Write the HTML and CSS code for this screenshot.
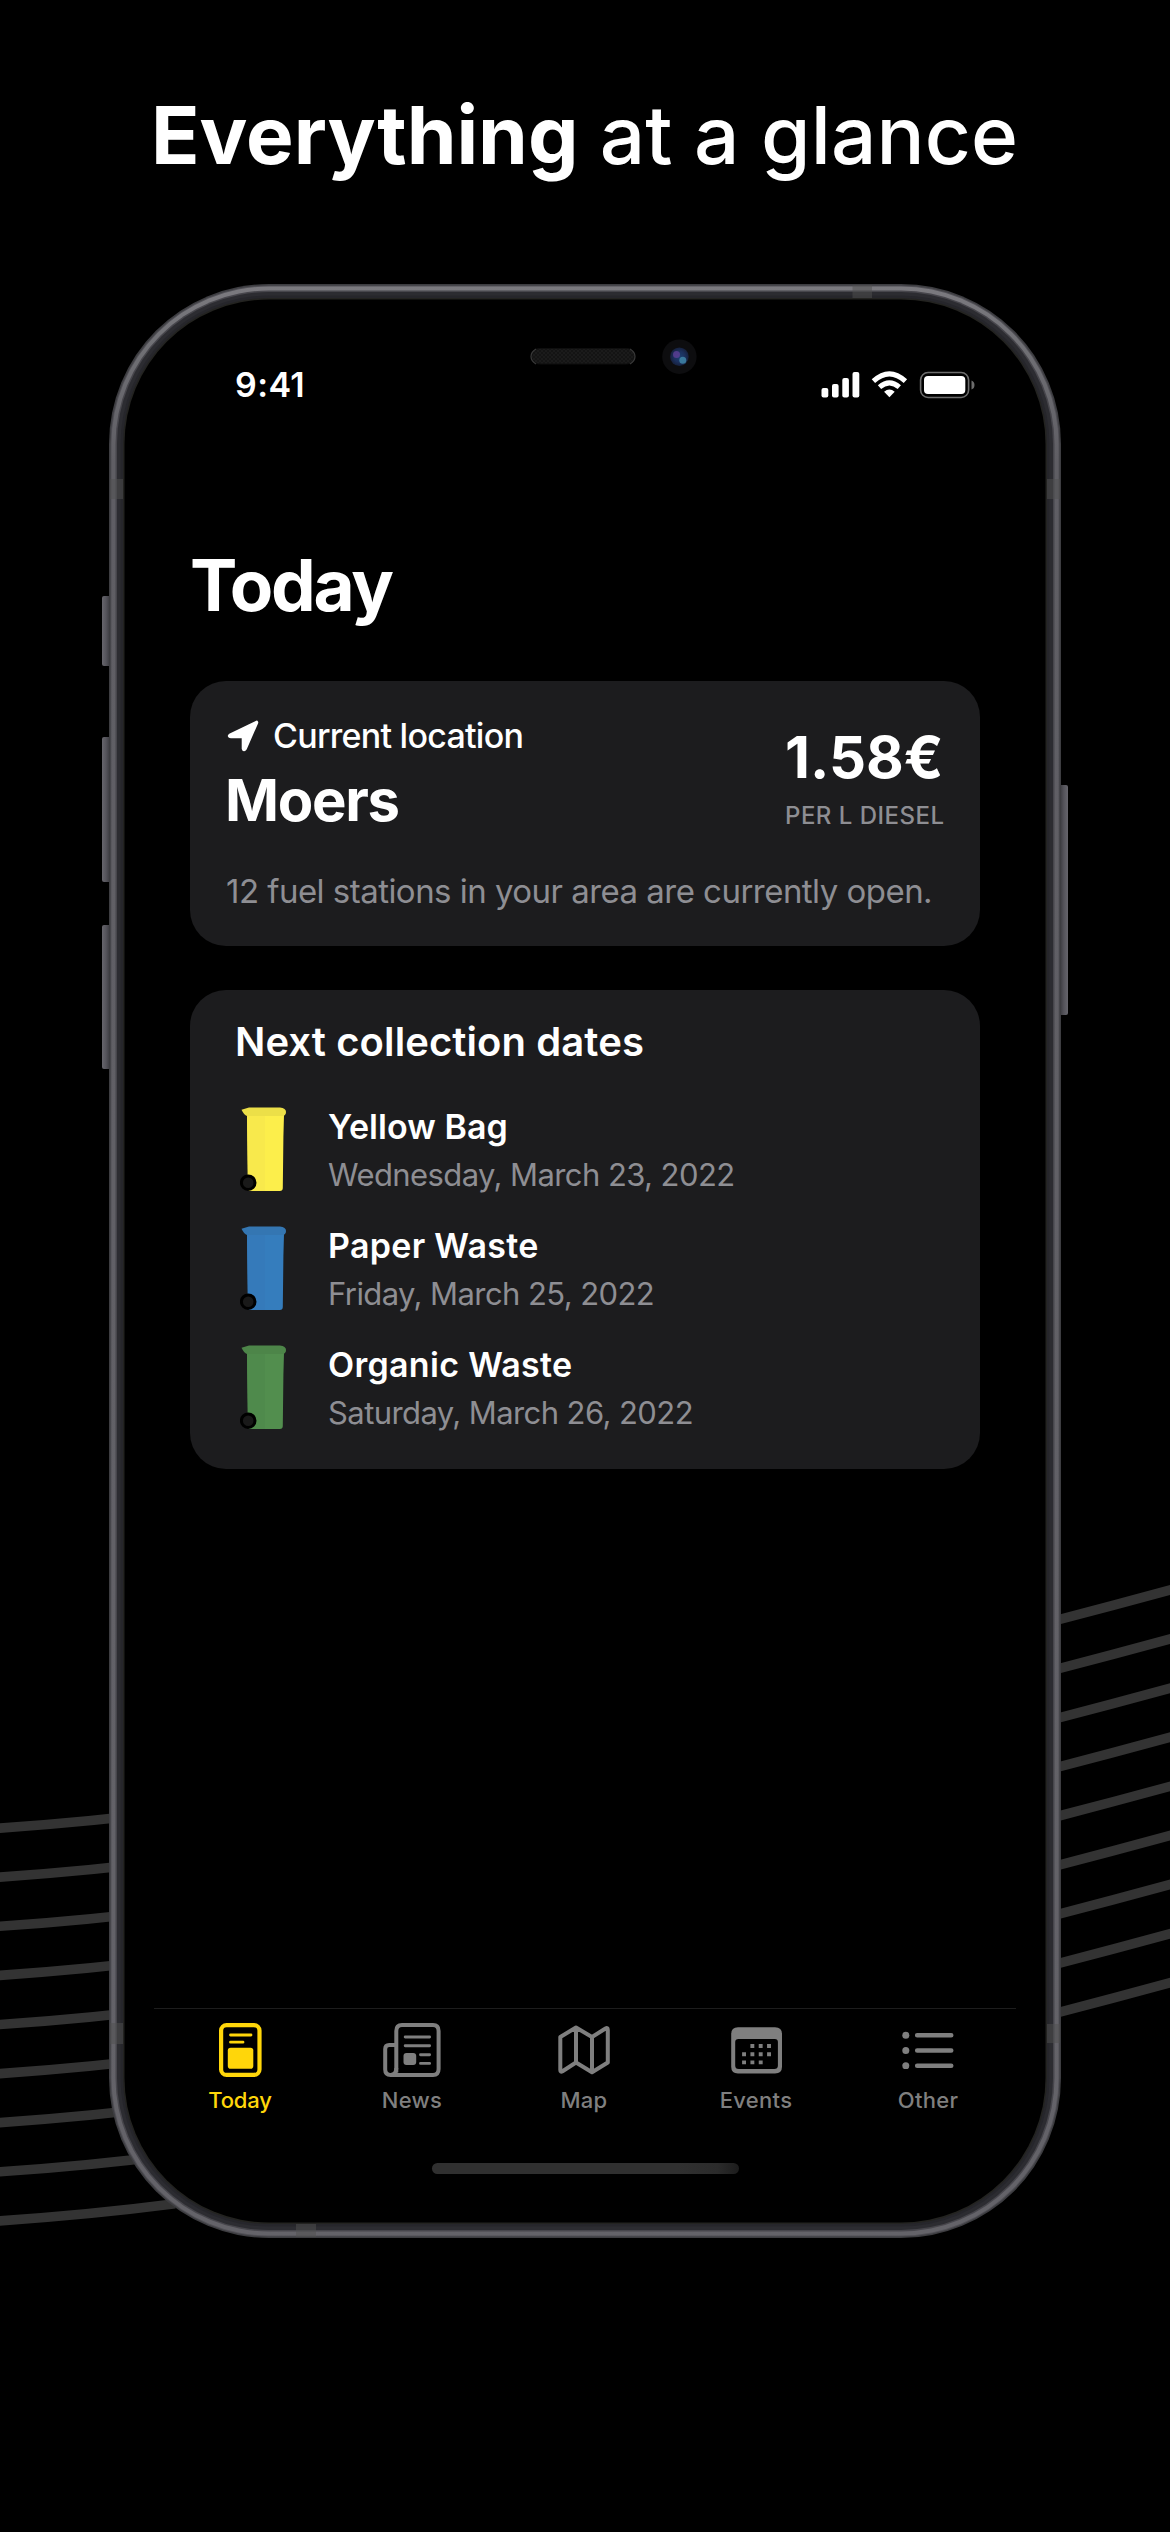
FILE: index.html
```html
<!DOCTYPE html>
<html lang="en">
<head>
<meta charset="utf-8">
<title>Everything at a glance</title>
<link rel="stylesheet" href="styles.css">
</head>
<body>
<svg class="waves" viewBox="0 0 1170 2532" aria-hidden="true">
  <defs>
    <path id="wave-left" d="M-2 1828.2Q90 1822 175 1811"/>
    <path id="wave-right" d="M1055 1620.6Q1115 1605 1175 1588.6"/>
  </defs>
  <g fill="none" stroke="#333" stroke-width="9.6">
    <use href="#wave-left"/><use href="#wave-left" y="49.1"/><use href="#wave-left" y="98.2"/>
    <use href="#wave-left" y="147.3"/><use href="#wave-left" y="196.4"/><use href="#wave-left" y="245.5"/>
    <use href="#wave-left" y="294.6"/><use href="#wave-left" y="343.7"/><use href="#wave-left" y="392.8"/>
    <use href="#wave-right"/><use href="#wave-right" y="49.1"/><use href="#wave-right" y="98.2"/>
    <use href="#wave-right" y="147.3"/><use href="#wave-right" y="196.4"/><use href="#wave-right" y="245.5"/>
    <use href="#wave-right" y="294.6"/><use href="#wave-right" y="343.7"/><use href="#wave-right" y="392.8"/>
  </g>
</svg>

<h1 class="headline"><strong>Everything</strong> <span>at a glance</span></h1>

<main class="phone">
  <svg class="hardware" viewBox="-10 0 972 1954" aria-hidden="true">
    <defs>
      <linearGradient id="rim" x1="0" y1="0" x2="0" y2="1">
        <stop offset="0" stop-color="#7b7a7f"/><stop offset=".03" stop-color="#707075"/>
        <stop offset=".09" stop-color="#5f5e64"/><stop offset="1" stop-color="#646369"/>
      </linearGradient>
      <linearGradient id="button" x1="0" x2="1">
        <stop offset="0" stop-color="#66656c"/><stop offset=".45" stop-color="#55545b"/><stop offset="1" stop-color="#333338"/>
      </linearGradient>
      <linearGradient id="button-right" x1="1" x2="0">
        <stop offset="0" stop-color="#66656c"/><stop offset=".45" stop-color="#55545b"/><stop offset="1" stop-color="#333338"/>
      </linearGradient>
      <pattern id="mesh" width="4" height="4" patternUnits="userSpaceOnUse">
        <rect width="4" height="4" fill="#1b1b1b"/><circle cx="1" cy="1" r=".9" fill="#101010"/><circle cx="3" cy="3" r=".9" fill="#101010"/>
      </pattern>
      <radialGradient id="lens"><stop offset="0" stop-color="#1c3f70"/><stop offset=".6" stop-color="#1b2f5c"/><stop offset="1" stop-color="#16203c"/></radialGradient>
    </defs>
    <g fill="url(#button)">
      <rect x="-7" y="312" width="9" height="70" rx="2"/>
      <rect x="-7" y="453" width="9" height="145" rx="2"/>
      <rect x="-7" y="641" width="9" height="144" rx="2"/>
    </g>
    <rect x="950" y="501" width="9" height="230" rx="2" fill="url(#button-right)"/>
    <rect width="952" height="1954" rx="160" fill="#3d3d41"/>
    <rect x="1.5" y="1.5" width="949" height="1951" rx="158.500" fill="#515056"/>
    <rect x="2.500" y="2.500" width="947" height="1949" rx="157.500" fill="url(#rim)"/>
    <rect x="6.500" y="6.500" width="939" height="1941" rx="153.500" fill="#47464c"/>
    <rect x="8" y="8" width="936" height="1938" rx="152" fill="#2c2c31"/>
    <rect x="11.500" y="11.500" width="929" height="1931" rx="148.500" fill="#26262b"/>
    <rect x="14" y="14" width="924" height="1926" rx="146" fill="#232320"/>
    <rect x="15.500" y="15.500" width="921" height="1923" rx="144.500" fill="#000"/>
    <g fill="#505050" opacity=".5">
      <rect x="743.500" y="1" width="19.500" height="13"/>
      <rect x="187" y="1940" width="20" height="13"/>
      <rect x="1" y="195" width="13" height="20"/>
      <rect x="938" y="195" width="13" height="20"/>
      <rect x="1" y="1739" width="13" height="21"/>
      <rect x="938" y="1740" width="13" height="19"/>
    </g>
    <rect x="422.500" y="64.500" width="103" height="15.500" rx="7.700" fill="url(#mesh)" stroke="#0e0e0e"/>
    <path d="M427 65q-5 3-5 7.500t5 7.500M521 65q5 3 5 7.500t-5 7.500" fill="none" stroke="#3a3a3a" stroke-width="1.200"/>
    <circle cx="570.400" cy="72.700" r="17.200" fill="#0d0d0f"/>
    <circle cx="570.400" cy="72.700" r="9.300" fill="url(#lens)"/>
    <circle cx="567.500" cy="70.500" r="3.500" fill="#5e3f96" opacity=".8"/>
    <circle cx="573.800" cy="76.300" r="3.500" fill="#3f86a8" opacity=".85"/>
  </svg>

  <header class="status">
    <time>9:41</time>
    <svg width="154" height="28" viewBox="821 371 154 28" aria-label="Signal, Wi-Fi and battery">
      <g fill="#fff">
        <rect x="821.500" y="388" width="6.800" height="9.500" rx="2"/>
        <rect x="832" y="384" width="6.600" height="13.500" rx="2"/>
        <rect x="842.300" y="378" width="6.600" height="19.500" rx="2"/>
        <rect x="852.500" y="372" width="6.800" height="25.500" rx="2"/>
        <path d="M889.400 397.200l-5.300-5.500q5.300-4.500 10.600 0z"/>
      </g>
      <g fill="none" stroke="#fff" stroke-width="5">
        <path d="M879.500 387.200q9.900-8.600 19.800 0"/>
        <path d="M873.400 381.200q16-14.600 32 0"/>
      </g>
      <rect x="920.600" y="372.500" width="48" height="25" rx="7.500" fill="none" stroke="#6c6c6c" stroke-width="1.600"/>
      <rect x="924" y="376" width="41.300" height="18" rx="4" fill="#fff"/>
      <path d="M971.500 380.500q3 1 3 4.500t-3 4.500z" fill="#6c6c6c"/>
    </svg>
  </header>

  <h2 class="title">Today</h2>

  <section class="card location">
    <div class="location-top">
      <div>
        <div class="current">
          <svg width="33" height="33" viewBox="0 0 33 33" aria-hidden="true"><path d="M29.500 2.500L18 28.700Q17 30.500 16.500 28.500V16.500H4Q1.500 16.200 3.500 15z" fill="#fff" stroke="#fff" stroke-width="3.600" stroke-linejoin="round"/></svg>
          <span>Current location</span>
        </div>
        <p class="city">Moers</p>
      </div>
      <div class="price">
        <p class="amount">1.58€</p>
        <p class="unit">PER L DIESEL</p>
      </div>
    </div>
    <p class="stations">12 fuel stations in your area are currently open.</p>
  </section>

  <section class="card dates">
    <h3>Next collection dates</h3>
    <ul>
      <li class="yellow">
        <svg class="bin" viewBox="0 0 48 86" aria-hidden="true"><path class="body" d="M7 8h37l-.6 22-.6 51q0 3-3 3H8z"/><path class="side" d="M7 8h18v76H8z"/><path class="lid" d="M1.500 2.800L9 .5h31q6 .6 6 4.500 0 3-3 4H7q-3-1-5.500-6.200z"/><circle cx="8.200" cy="75.700" r="6.800" fill="#191919" stroke="#000" stroke-width="3"/></svg>
        <div><p class="name">Yellow Bag</p><p class="date">Wednesday, March 23, 2022</p></div>
      </li>
      <li class="blue">
        <svg class="bin" viewBox="0 0 48 86" aria-hidden="true"><path class="body" d="M7 8h37l-.6 22-.6 51q0 3-3 3H8z"/><path class="side" d="M7 8h18v76H8z"/><path class="lid" d="M1.500 2.800L9 .5h31q6 .6 6 4.500 0 3-3 4H7q-3-1-5.500-6.200z"/><circle cx="8.200" cy="75.700" r="6.800" fill="#191919" stroke="#000" stroke-width="3"/></svg>
        <div><p class="name paper">Paper Waste</p><p class="date">Friday, March 25, 2022</p></div>
      </li>
      <li class="green">
        <svg class="bin" viewBox="0 0 48 86" aria-hidden="true"><path class="body" d="M7 8h37l-.6 22-.6 51q0 3-3 3H8z"/><path class="side" d="M7 8h18v76H8z"/><path class="lid" d="M1.500 2.800L9 .5h31q6 .6 6 4.500 0 3-3 4H7q-3-1-5.500-6.200z"/><circle cx="8.200" cy="75.700" r="6.800" fill="#191919" stroke="#000" stroke-width="3"/></svg>
        <div><p class="name paper">Organic Waste</p><p class="date">Saturday, March 26, 2022</p></div>
      </li>
    </ul>
  </section>

  <nav class="tabs">
    <a class="active">
      <span class="icon"><svg width="43" height="54" viewBox="0 0 43 54"><rect x="2.100" y="2.100" width="38.400" height="49.800" rx="5.500" fill="none" stroke="currentColor" stroke-width="4.200"/><path d="M11.500 12H32M11.500 19.200H24" stroke="currentColor" stroke-width="2.800" stroke-linecap="round"/><rect x="8.800" y="24.700" width="25.500" height="21" rx="2.800" fill="currentColor"/></svg></span>
      <span class="label">Today</span>
    </a>
    <a>
      <span class="icon"><svg width="58" height="54" viewBox="0 0 58 54"><g fill="none" stroke="currentColor" stroke-width="4"><path d="M13.300 49.500V8Q13.300 2.100 19 2.100H50Q55.600 2.100 55.600 8V46Q55.600 51.900 50 51.900H7.600Q2.200 51.900 2.200 46.500V26Q2.200 22 6.200 22H13"/><path d="M13.300 45Q13.300 51.900 7.600 51.900"/></g><path d="M22.200 14H46.600M22.200 22.800H46.600M37.500 31.700H46.600M37.500 40.400H46.600" stroke="currentColor" stroke-width="2.900" stroke-linecap="round"/><rect x="20.500" y="30" width="12.700" height="12" rx="3" fill="currentColor"/></svg></span>
      <span class="label">News</span>
    </a>
    <a>
      <span class="icon"><svg width="52" height="50" viewBox="0 0 52 50"><path d="M2.300 12L18 2.500 34 12 47.500 3.500Q49.800 2.300 49.800 5V37.500L34 47.300 18 37.500 4.500 46.200Q2.300 47.500 2.300 45zM18 2.500V37.500M34 12V47.300" fill="none" stroke="currentColor" stroke-width="4" stroke-linejoin="round"/></svg></span>
      <span class="label">Map</span>
    </a>
    <a>
      <span class="icon"><svg width="51" height="47" viewBox="0 0 51 47"><path fill="currentColor" fill-rule="evenodd" d="M7 .3H44Q51 .3 51 7V39.800Q51 46.500 44 46.500H7Q.2 46.500 .2 39.800V7Q.2 .3 7 .3zM7.500 12Q4.200 12 4.200 15V38.500Q4.200 42 7.800 42H43.200Q46.900 42 46.900 38.500V15Q46.900 12 43.800 12z"/><path d="M19.400 19H41.500M11.100 27.200H41.500M11.100 35.400H32" fill="none" stroke="currentColor" stroke-width="3.900" stroke-dasharray="3.900 4.430"/></svg></span>
      <span class="label">Events</span>
    </a>
    <a>
      <span class="icon"><svg width="52" height="38" viewBox="0 0 52 38"><g fill="currentColor"><circle cx="3.800" cy="4.200" r="3.500"/><circle cx="3.800" cy="19.500" r="3.500"/><circle cx="3.800" cy="34.800" r="3.500"/></g><path d="M15.200 4.200H49.200M15.200 19.500H49.200M15.200 34.800H49.200" stroke="currentColor" stroke-width="4.600" stroke-linecap="round"/></svg></span>
      <span class="label">Other</span>
    </a>
  </nav>
  <div class="home-indicator"></div>
</main>
</body>
</html>
```
FILE: styles.css
```css
* { box-sizing: border-box; margin: 0; padding: 0; }

body {
  position: relative;
  width: 1170px;
  height: 2532px;
  padding-top: 95px;
  overflow: hidden;
  background: #000;
  color: #fff;
  font-family: Inter, "Liberation Sans", sans-serif;
}

.waves { position: absolute; inset: 0; width: 1170px; height: 2532px; }

.headline {
  position: relative;
  padding-left: 151px;
  font-size: 80px;
  line-height: 80px;
  font-weight: 450;
  white-space: nowrap;
}
.headline strong { font-weight: 700; }
.headline span { letter-spacing: 0.1px; }

.phone {
  position: relative;
  display: flex;
  flex-direction: column;
  width: 952px;
  height: 1954px;
  margin: 109px 0 0 109px;
  padding: 84px 81px 64px;
}
.hardware { position: absolute; top: 0; left: -10px; width: 972px; height: 1954px; }

.status, .title, .card, .tabs, .home-indicator { position: relative; }

.status {
  display: flex;
  align-items: center;
  justify-content: space-between;
  height: 34px;
  padding: 0 5px 0 45px;
}
.status time { font-size: 34px; line-height: 34px; font-weight: 600; letter-spacing: 0.4px; }

.title {
  margin-top: 143px;
  font-size: 71px;
  line-height: 80px;
  font-weight: 700;
  letter-spacing: -2.2px;
}

.card { background: #1c1c1e; border-radius: 36px; }

.location { height: 265px; margin-top: 56px; padding: 35px 35px 0 36px; }
.location-top { display: flex; justify-content: space-between; height: 155px; }
.current {
  display: flex;
  align-items: center;
  gap: 13px;
  height: 40px;
  padding-left: 1px;
  font-size: 34px;
  line-height: 40px;
  font-weight: 500;
  letter-spacing: -0.74px;
}
.city { margin-top: 9px; font-size: 58px; line-height: 70px; font-weight: 700; letter-spacing: -1.3px; margin-left: -1px; }
.price { width: 160px; padding-top: 6px; white-space: nowrap; }
.amount { font-size: 58px; line-height: 70px; font-weight: 700; }
.unit { margin-top: 9px; font-size: 24px; line-height: 30px; font-weight: 500; color: #8e8e93; letter-spacing: 0.49px; }
.stations { font-size: 33px; line-height: 40px; color: #8e8e93; letter-spacing: -0.53px; white-space: nowrap; }

.dates { height: 479px; margin-top: 44px; padding: 27px 45px 0; }
.dates h3 { font-size: 40px; line-height: 50px; font-weight: 600; letter-spacing: 0.09px; }
.dates ul { display: grid; gap: 31px; margin-top: 40px; list-style: none; }
.dates li { display: flex; gap: 40px; height: 88px; padding-left: 5px; }
.bin { width: 48px; height: 86px; }
.bin .body { fill: var(--body); }
.bin .side { fill: var(--side); }
.bin .lid { fill: var(--lid); }
.yellow { --body: #fcee4b; --side: #f8e94c; --lid: #ecdf48; }
.blue { --body: #357dbd; --side: #357aba; --lid: #3476b2; }
.green { --body: #528e4e; --side: #4f8a4c; --lid: #4d8549; }
.name { font-size: 34px; line-height: 40px; font-weight: 600; letter-spacing: 0.05px; }
.name.paper { letter-spacing: 0.3px; }
.date { margin-top: 8px; font-size: 31px; line-height: 40px; color: #8e8e93; letter-spacing: -0.58px; }

.tabs {
  display: grid;
  grid-template-columns: repeat(5, 172px);
  margin: auto -36px 0;
  padding: 12px 1px 0 0;
  border-top: 1px solid #1d1d1d;
  color: #7f7f7f;
}
.tabs a { display: flex; flex-direction: column; align-items: center; gap: 8px; }
.tabs .active { color: #ffd60a; }
.icon { display: flex; align-items: center; height: 58px; }
.icon svg { display: block; }
.label { font-size: 22px; line-height: 26px; font-weight: 500; letter-spacing: 0.3px; }
.active .label { letter-spacing: -0.2px; }

.home-indicator {
  width: 307px;
  height: 11px;
  margin: 50px auto 0;
  border-radius: 6px;
  background: linear-gradient(90deg, #303030 80%, #2b2b2b 93%, #1c1c1c);
}
```
